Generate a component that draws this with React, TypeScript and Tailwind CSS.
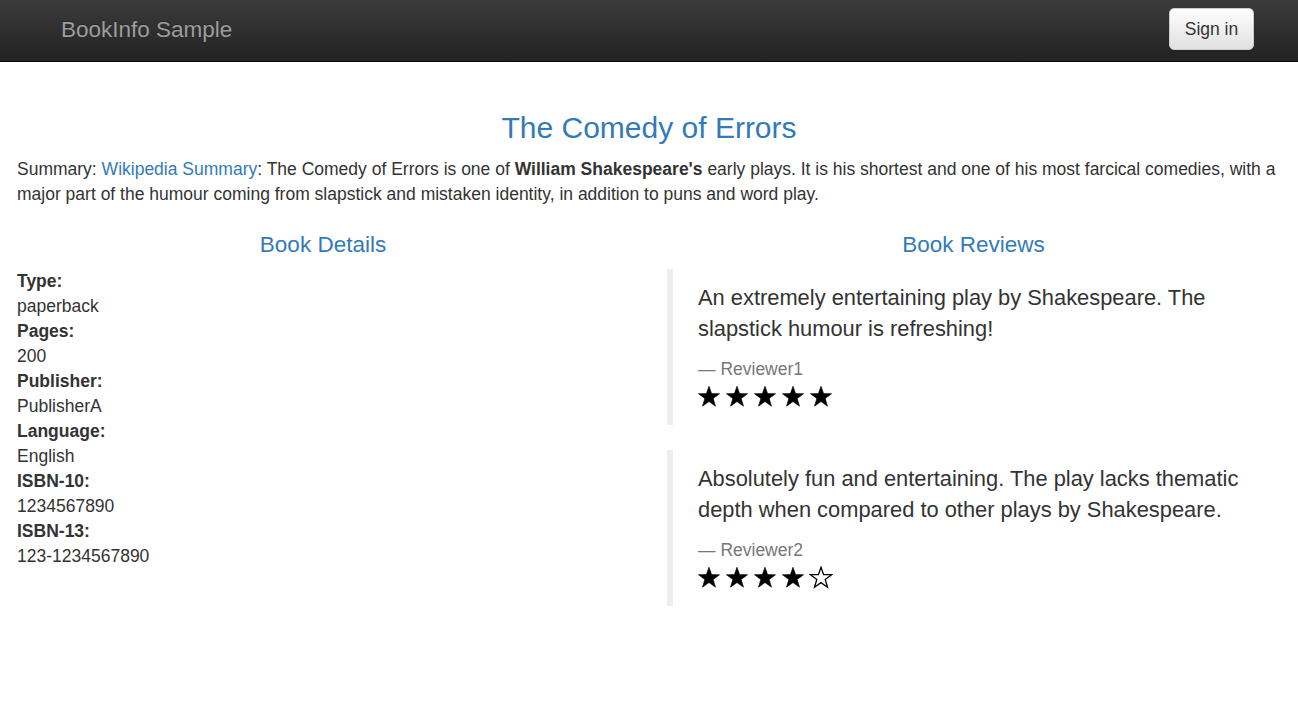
const FONT = { fontFamily: '"Liberation Sans", Arial, Helvetica, sans-serif' };

function Star({ filled }: { filled: boolean }) {
  return (
    <svg width="24" height="23" viewBox="0 0 24 23" className="block">
      <polygon
        points="12,1.2 14.6,8.6 22.6,8.7 16.2,13.5 18.5,21.2 12,16.6 5.5,21.2 7.8,13.5 1.4,8.7 9.4,8.6"
        fill={filled ? "#000" : "none"}
        stroke="#000"
        strokeWidth={filled ? 0.6 : 1.3}
        strokeLinejoin="miter"
      />
    </svg>
  );
}

function Review({ text, reviewer, stars }: { text: string; reviewer: string; stars: number }) {
  return (
    <blockquote className="border-l-[6px] border-[#eeeeee] pl-[25px] pr-[25px] pt-[12.5px] pb-[12.5px] mb-[25px]">
      <p className="text-[21.875px] leading-[31.25px] text-[#333] mb-[12.5px]">{text}</p>
      <small className="block text-[17.5px] leading-[25px] text-[#777]">— {reviewer}</small>
      <div className="flex gap-[4px] h-[31px] items-start pt-[3px] -ml-[1px]">
        {[0, 1, 2, 3, 4].map((i) => (
          <Star key={i} filled={i < stars} />
        ))}
      </div>
    </blockquote>
  );
}

const details = [
  ["Type:", "paperback"],
  ["Pages:", "200"],
  ["Publisher:", "PublisherA"],
  ["Language:", "English"],
  ["ISBN-10:", "1234567890"],
  ["ISBN-13:", "123-1234567890"],
];

export default function App() {
  return (
    <div className="min-h-screen bg-white text-[#333] text-[17.5px] leading-[25px]" style={FONT}>
      {/* navbar */}
      <nav className="h-[62px] border-b border-[#080808] bg-gradient-to-b from-[#3c3c3c] to-[#222222] flex items-start justify-between pl-[61px] pr-[44px]">
        <span className="text-[22.5px] leading-[25px] pt-[17px] text-[#9d9d9d] [text-shadow:0_-1px_0_rgba(0,0,0,0.25)]">
          BookInfo Sample
        </span>
        <button className="mt-[8px] h-[42px] w-[85px] rounded-[5px] border border-[#cccccc] bg-gradient-to-b from-white to-[#e0e0e0] text-[17.5px] text-[#333] shadow-[inset_0_1px_0_rgba(255,255,255,0.15),0_1px_1px_rgba(0,0,0,0.075)]">
          Sign in
        </button>
      </nav>

      <div className="px-[17px] pt-[49px]">
        <h3 className="text-center text-[30px] leading-[33px] text-[#337ab7] mb-[12.5px]">
          The Comedy of Errors
        </h3>
        <p className="mb-[12.5px]">
          Summary: <span className="text-[#337ab7]">Wikipedia Summary</span>: The Comedy of Errors is one of{" "}
          <b>William Shakespeare's</b> early plays. It is his shortest and one of his most farcical comedies,
          with a major part of the humour coming from slapstick and mistaken identity, in addition to puns and
          word play.
        </p>
      </div>

      <div className="flex">
        <div className="w-1/2 pl-[17px] pr-[20px]">
          <h4 className="text-center text-[22.5px] leading-[25px] text-[#337ab7] mt-[12.5px] mb-[12.5px]">
            Book Details
          </h4>
          <dl>
            {details.map(([k, v]) => (
              <div key={k}>
                <dt className="font-bold">{k}</dt>
                <dd>{v}</dd>
              </div>
            ))}
          </dl>
        </div>
        <div className="w-1/2 px-[18px]">
          <h4 className="text-center text-[22.5px] leading-[25px] text-[#337ab7] mt-[12.5px] mb-[12.5px]">
            Book Reviews
          </h4>
          <Review
            text="An extremely entertaining play by Shakespeare. The slapstick humour is refreshing!"
            reviewer="Reviewer1"
            stars={5}
          />
          <Review
            text="Absolutely fun and entertaining. The play lacks thematic depth when compared to other plays by Shakespeare."
            reviewer="Reviewer2"
            stars={4}
          />
        </div>
      </div>
    </div>
  );
}
